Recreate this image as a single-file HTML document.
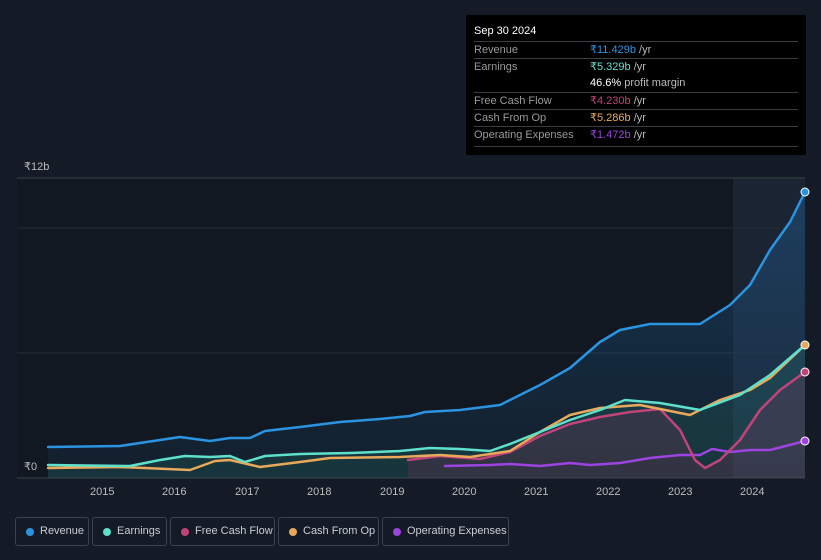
<!DOCTYPE html>
<html><head><meta charset="utf-8"><style>
*{margin:0;padding:0;box-sizing:border-box}
body{width:821px;height:560px;background:#151b26;font-family:"Liberation Sans",sans-serif;position:relative;overflow:hidden;color:#ccc}
.tip{position:absolute;left:466px;top:15px;width:340px;height:140px;background:#000;border-radius:2px;font-size:11px}
.tip .h{position:absolute;left:8px;top:10px;color:#fff;font-size:11px}
.row{position:absolute;left:8px;width:324px;border-top:1px solid #3a3d44;height:17px;line-height:17px;color:#999}
.row span{position:absolute;left:116px;color:#bbb}
.leg{position:absolute;top:517px;height:29px;border:1px solid #3c4250;border-radius:3px;font-size:11px;color:#c8ccd4;line-height:27px;padding-left:24px;white-space:nowrap}
.leg i{position:absolute;left:10px;top:10px;width:8px;height:8px;border-radius:50%}
.ax{position:absolute;font-size:11px;color:#bbb}
</style></head><body>
<svg width="821" height="560" style="position:absolute;left:0;top:0">
<defs>
<linearGradient id="g1" x1="0" y1="0" x2="0" y2="1"><stop offset="0" stop-color="#1e6fae" stop-opacity=".35"/><stop offset="1" stop-color="#1e6fae" stop-opacity=".08"/></linearGradient>
</defs>
<rect x="17" y="178" width="788" height="300" fill="#121821"/>
<rect x="733" y="178" width="72" height="300" fill="#1b2433"/>
<line x1="17" y1="178" x2="805" y2="178" stroke="#3a404a"/>
<line x1="17" y1="228" x2="805" y2="228" stroke="#262c36"/>
<line x1="17" y1="353" x2="805" y2="353" stroke="#262c36"/>
<line x1="17" y1="478" x2="805" y2="478" stroke="#3a404a"/>
<path d="M48,447 L120,446 180,437 210,441 230,438 250,438 265,431 300,427 340,422 380,419 410,416 425,412 460,410 500,405 540,385 570,368 600,342 620,330 650,324 680,324 700,324 730,305 750,285 770,250 790,222 805,192 L805,478 48,478Z" fill="url(#g1)"/>
<path d="M48,465 L130,466 160,460 185,456 210,457 230,456 245,462 265,456 300,454 350,453 400,451 430,448 460,449 490,451 510,444 540,432 570,420 600,410 625,400 660,403 700,410 740,395 770,375 805,345 L805,478 48,478Z" fill="#2a8a7a" fill-opacity=".2"/>
<path d="M408,460 L440,456 480,459 510,452 540,436 570,424 600,417 630,412 660,409 680,430 695,460 705,468 720,460 740,440 760,410 780,390 805,372 L805,478 408,478Z" fill="#a03060" fill-opacity=".2"/>
<g fill="none" stroke-width="2.5" stroke-linejoin="round" stroke-linecap="round">
<path d="M445,466 L490,465 510,464 540,466 570,463 590,465 620,463 650,458 680,455 700,455 712,449 730,452 750,450 770,450 805,441" stroke="#9b44e0"/>
<path d="M408,460 L440,456 480,459 510,452 540,436 570,424 600,417 630,412 660,409 680,430 695,460 705,468 720,460 740,440 760,410 780,390 805,372" stroke="#c0447a"/>
<path d="M48,468 L120,467 190,470 215,461 230,460 260,467 300,462 330,458 400,457 440,455 470,457 510,451 540,432 570,415 600,408 640,405 665,410 690,415 720,400 750,390 770,378 805,345" stroke="#e8a95a"/>
<path d="M48,465 L130,466 160,460 185,456 210,457 230,456 245,462 265,456 300,454 350,453 400,451 430,448 460,449 490,451 510,444 540,432 570,420 600,410 625,400 660,403 700,410 740,395 770,375 805,345" stroke="#5fe0cc"/>
<path d="M48,447 L120,446 180,437 210,441 230,438 250,438 265,431 300,427 340,422 380,419 410,416 425,412 460,410 500,405 540,385 570,368 600,342 620,330 650,324 680,324 700,324 730,305 750,285 770,250 790,222 805,192" stroke="#2b94e0"/>
</g>
<circle cx="805" cy="192" r="4" fill="#2b94e0" stroke="#fff" stroke-width="1"/>
<circle cx="805" cy="345" r="4" fill="#e8a95a" stroke="#fff" stroke-width="1"/>
<circle cx="805" cy="372" r="4" fill="#c0447a" stroke="#fff" stroke-width="1"/>
<circle cx="805" cy="441" r="4" fill="#9b44e0" stroke="#fff" stroke-width="1"/>
</svg>
<div class="ax" style="left:24px;top:160px">₹12b</div>
<div class="ax" style="left:24px;top:460px">₹0</div>
<div class="ax" style="left:90px;top:486px">2015</div>
<div class="ax" style="left:162px;top:486px">2016</div>
<div class="ax" style="left:235px;top:486px">2017</div>
<div class="ax" style="left:307px;top:486px">2018</div>
<div class="ax" style="left:380px;top:486px">2019</div>
<div class="ax" style="left:452px;top:486px">2020</div>
<div class="ax" style="left:524px;top:486px">2021</div>
<div class="ax" style="left:596px;top:486px">2022</div>
<div class="ax" style="left:668px;top:486px">2023</div>
<div class="ax" style="left:740px;top:486px">2024</div>
<div class="tip">
<div class="h">Sep 30 2024</div>
<div class="row" style="top:26px">Revenue<span><b style="color:#2b94e0;font-weight:normal">₹11.429b</b> /yr</span></div>
<div class="row" style="top:43px">Earnings<span><b style="color:#5fe0cc;font-weight:normal">₹5.329b</b> /yr</span></div>
<div class="row" style="top:60px;border-top:none"><span><b style="color:#fff;font-weight:normal">46.6%</b> profit margin</span></div>
<div class="row" style="top:77px">Free Cash Flow<span><b style="color:#c0447a;font-weight:normal">₹4.230b</b> /yr</span></div>
<div class="row" style="top:94px">Cash From Op<span><b style="color:#e8a95a;font-weight:normal">₹5.286b</b> /yr</span></div>
<div class="row" style="top:111px">Operating Expenses<span><b style="color:#9b44e0;font-weight:normal">₹1.472b</b> /yr</span></div>
<div class="row" style="top:131px;height:1px"></div>
</div>
<div class="leg" style="left:15px;width:74px"><i style="background:#2b94e0"></i>Revenue</div>
<div class="leg" style="left:92px;width:75px"><i style="background:#5fe0cc"></i>Earnings</div>
<div class="leg" style="left:170px;width:105px"><i style="background:#c0447a"></i>Free Cash Flow</div>
<div class="leg" style="left:278px;width:101px"><i style="background:#e8a95a"></i>Cash From Op</div>
<div class="leg" style="left:382px;width:127px"><i style="background:#9b44e0"></i>Operating Expenses</div>
</body></html>
